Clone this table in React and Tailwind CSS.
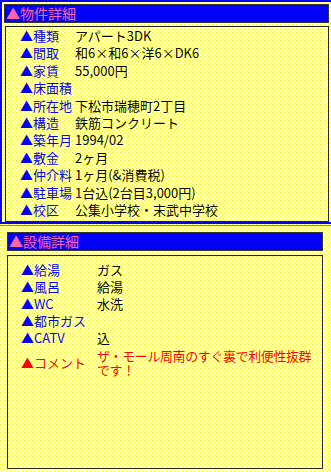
import React from "react";

const bukken = [
  { label: "種類", value: "アパート3DK" },
  { label: "間取", value: "和6×和6×洋6×DK6" },
  { label: "家賃", value: "55,000円" },
  { label: "床面積", value: "" },
  { label: "所在地", value: "下松市瑞穂町2丁目" },
  { label: "構造", value: "鉄筋コンクリート" },
  { label: "築年月", value: "1994/02" },
  { label: "敷金", value: "2ヶ月" },
  { label: "仲介料", value: "1ヶ月(&消費税)" },
  { label: "駐車場", value: "1台込(2台目3,000円)" },
  { label: "校区", value: "公集小学校・末武中学校" },
];

const setsubi = [
  { label: "給湯", value: "ガス" },
  { label: "風呂", value: "給湯" },
  { label: "WC", value: "水洗" },
  { label: "都市ガス", value: "" },
  { label: "CATV", value: "込" },
];

const dots =
  "bg-[conic-gradient(at_1px_1px,transparent_75%,#ffff00_0),conic-gradient(at_1px_1px,transparent_75%,#ffff00_0)] bg-[length:4px_4px] bg-[position:0_0,2px_2px] bg-white";

function Header({ title, className }) {
  return (
    <div
      className={
        "h-[19px] bg-[#0000ff] border border-[#333] text-[#ff66aa] text-[14px] leading-[17px] pl-[1px] " +
        className
      }
    >
      ▲{title}
    </div>
  );
}

export default function App() {
  return (
    <div
      className={"w-[331px] h-[472px] overflow-hidden " + dots}
      style={{ fontFamily: '"Noto Sans CJK JP", "Noto Sans", sans-serif' }}
    >
      {/* 物件詳細 */}
      <div className="w-[340px] h-[224px] border-2 border-[#0000ff] pt-[2px] pl-[2px]">
        <Header title="物件詳細" className="w-[325px]" />
        <div className="mt-[3px] ml-[1px] w-[324px] h-[196px] border border-[#222] pl-[14px]">
          {bukken.map((row) => (
            <div key={row.label} className="flex h-[17.4px] leading-[17.4px] text-[13px]">
              <div className="w-[55px] shrink-0 text-[#0000ff]">▲{row.label}</div>
              <div className="text-black whitespace-nowrap">{row.value}</div>
            </div>
          ))}
        </div>
      </div>

      <div className="mt-[1px] h-px bg-[#888]" />

      {/* 設備詳細 */}
      <div className="pl-[7px]">
        <Header title="設備詳細" className="mt-[6px] w-[316px] h-[18px] leading-[16px]" />
        <div className="mt-[4px] w-[316px] h-[214px] border border-[#222] pl-[13px] pt-[5px]">
          {setsubi.map((row) => (
            <div key={row.label} className="flex h-[17px] leading-[17px] text-[13px]">
              <div className="w-[76px] shrink-0 text-[#0000ff]">▲{row.label}</div>
              <div className="text-black">{row.value}</div>
            </div>
          ))}
          <div className="flex items-center h-[34px] text-[13px] text-[#ff0000]">
            <div className="w-[76px] shrink-0">▲コメント</div>
            <div className="w-[218px] leading-[14px] tracking-[-0.4px]">
              ザ・モール周南のすぐ裏で利便性抜群です！
            </div>
          </div>
        </div>
      </div>
    </div>
  );
}
